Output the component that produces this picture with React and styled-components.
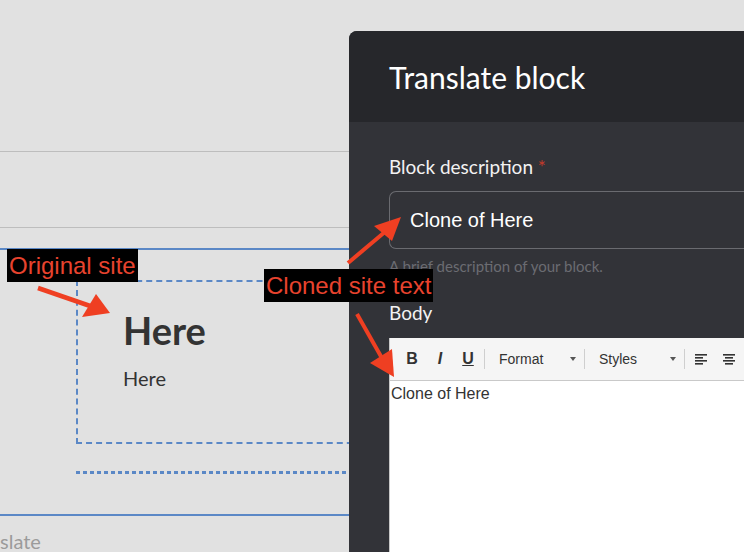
import styled, { createGlobalStyle } from "styled-components";

const GlobalStyle = createGlobalStyle`
  html, body {
    margin: 0;
    padding: 0;
    background: #e1e1e1;
    overflow: hidden;
  }
  * {
    box-sizing: border-box;
  }
`;

const ARROW_RED = "#ef3f22";

const App = () => {
  return (
    <Page>
      <GlobalStyle />
      <Site>
        <TopBand />
        <MidBand />
        <Region>
          <DashedBox>
            <BlockTitle>Here</BlockTitle>
            <BlockText>Here</BlockText>
          </DashedBox>
          <DottedRule />
        </Region>
        <Footer>slate</Footer>
      </Site>

      <Dialog>
        <DialogHeader>
          <DialogTitle>Translate block</DialogTitle>
        </DialogHeader>
        <DialogBody>
          <Label>
            Block description <Required>*</Required>
          </Label>
          <TextInput>Clone of Here</TextInput>
          <Help>A brief description of your block.</Help>
          <Label $spaced>Body</Label>
          <Editor>
            <Toolbar>
              <ToolButton>B</ToolButton>
              <ToolButton $italic>I</ToolButton>
              <ToolButton $underline>U</ToolButton>
              <Separator />
              <Dropdown>
                Format
                <Caret />
              </Dropdown>
              <Separator />
              <Dropdown>
                Styles
                <Caret />
              </Dropdown>
              <Separator />
              <IconButton>
                <AlignIcon kind="left" />
              </IconButton>
              <IconButton>
                <AlignIcon kind="center" />
              </IconButton>
            </Toolbar>
            <EditorContent>Clone of Here</EditorContent>
          </Editor>
        </DialogBody>
      </Dialog>

      <Note style={{ left: 7, top: 249 }}>Original site</Note>
      <Note style={{ left: 264, top: 269 }}>Cloned site text</Note>

      <Arrows width="744" height="552" viewBox="0 0 744 552">
        <line x1="38" y1="288" x2="96" y2="308" stroke={ARROW_RED} strokeWidth="4.5" />
        <polygon points="82,317 96,294 110,313" fill={ARROW_RED} />

        <line x1="348" y1="263" x2="386" y2="231" stroke={ARROW_RED} strokeWidth="4" />
        <polygon points="374,226 401,217 392,241" fill={ARROW_RED} />

        <line x1="357" y1="314" x2="383" y2="360" stroke={ARROW_RED} strokeWidth="4" />
        <polygon points="370,363 392,349 394,377" fill={ARROW_RED} />
      </Arrows>
    </Page>
  );
};

export default App;

const AlignIcon = ({ kind }) => {
  const rows =
    kind === "left"
      ? [
          [0, 12],
          [0, 8],
          [0, 12],
          [0, 8],
        ]
      : [
          [0, 12],
          [2, 8],
          [0, 12],
          [2, 8],
        ];
  return (
    <svg width="12" height="11" viewBox="0 0 12 11">
      {rows.map(([x, w], i) => (
        <rect key={i} x={x} y={i * 3} width={w} height="1.6" fill="#333" />
      ))}
    </svg>
  );
};

const Page = styled.div`
  position: relative;
  width: 744px;
  height: 552px;
  overflow: hidden;
  font-family: Lato, "Open Sans", sans-serif;
`;

const Site = styled.div`
  display: flex;
  flex-direction: column;
`;

const TopBand = styled.div`
  height: 152px;
  border-bottom: 1px solid #bdbdbd;
`;

const MidBand = styled.div`
  height: 76px;
  border-bottom: 1px solid #bdbdbd;
  margin-bottom: 20px;
`;

const Region = styled.div`
  border-top: 2px solid #5b88c6;
  border-bottom: 2px solid #5b88c6;
  padding: 30px 0 40px 76px;
`;

const DashedBox = styled.div`
  border: 2px dashed #5b88c6;
  border-right: none;
  height: 164px;
  padding: 26px 0 0 45px;
`;

const BlockTitle = styled.h2`
  margin: 0;
  font-size: 38px;
  line-height: 1.2;
  font-weight: 700;
  color: #333;
`;

const BlockText = styled.p`
  margin: 12px 0 0;
  font-size: 20px;
  line-height: 1.2;
  color: #333;
`;

const DottedRule = styled.div`
  margin-top: 27px;
  height: 3px;
  background: repeating-linear-gradient(
    to right,
    #5b88c6 0 4px,
    transparent 4px 7px
  );
`;

const Footer = styled.div`
  padding-top: 13px;
  font-size: 20px;
  color: #9b9b9b;
`;

const Dialog = styled.div`
  position: absolute;
  left: 349px;
  top: 31px;
  width: 440px;
  height: 540px;
  border-radius: 8px 0 0 0;
  overflow: hidden;
  background: #323338;
  display: flex;
  flex-direction: column;
`;

const DialogHeader = styled.div`
  height: 91px;
  flex-shrink: 0;
  background: #26272b;
  display: flex;
  align-items: center;
  padding-left: 40px;
`;

const DialogTitle = styled.h1`
  margin: 0;
  font-size: 30px;
  font-weight: 400;
  color: #fff;
`;

const DialogBody = styled.div`
  flex: 1;
  padding: 33px 0 0 40px;
  display: flex;
  flex-direction: column;
`;

const Label = styled.div`
  font-size: 19px;
  line-height: 23px;
  color: #f2f2f2;
  margin-top: ${(p) => (p.$spaced ? "26px" : "0")};
`;

const Required = styled.span`
  color: #c23a2b;
`;

const TextInput = styled.div`
  margin-top: 13px;
  height: 58px;
  border: 1.5px solid #6a6b70;
  border-right: none;
  border-radius: 7px 0 0 7px;
  display: flex;
  align-items: center;
  padding-left: 20px;
  font-family: "Liberation Sans", Arial, sans-serif;
  font-size: 20px;
  color: #fff;
`;

const Help = styled.div`
  margin-top: 8px;
  font-size: 15px;
  line-height: 18px;
  color: #6b6c72;
`;

const Editor = styled.div`
  flex: 1;
  margin-top: 14px;
  border-left: 1px solid #c8c8c8;
  background: #fff;
  font-family: "Liberation Sans", Arial, sans-serif;
`;

const Toolbar = styled.div`
  height: 43px;
  background: #f5f5f5;
  border-bottom: 1px solid #c9c9c9;
  display: flex;
  align-items: center;
  padding-left: 8px;
`;

const ToolButton = styled.div`
  width: 28px;
  text-align: center;
  font-size: 16px;
  font-weight: 700;
  color: #333;
  font-style: ${(p) => (p.$italic ? "italic" : "normal")};
  text-decoration: ${(p) => (p.$underline ? "underline" : "none")};
`;

const Separator = styled.div`
  width: 1px;
  height: 20px;
  background: #cfcfcf;
  margin: 0 2px;
`;

const Dropdown = styled.div`
  width: 95px;
  display: flex;
  align-items: center;
  justify-content: space-between;
  padding: 0 6px 0 12px;
  font-size: 14px;
  color: #333;
`;

const Caret = styled.span`
  width: 0;
  height: 0;
  border-left: 3.5px solid transparent;
  border-right: 3.5px solid transparent;
  border-top: 4px solid #555;
`;

const IconButton = styled.div`
  width: 28px;
  display: flex;
  justify-content: center;
  align-items: center;
`;

const EditorContent = styled.div`
  padding: 4px 0 0 1px;
  font-size: 16px;
  color: #333;
`;

const Note = styled.div`
  position: absolute;
  height: 33px;
  padding: 0 2px;
  background: #000;
  color: #e8432e;
  font-family: "Liberation Sans", Arial, sans-serif;
  font-size: 24px;
  line-height: 33px;
  white-space: nowrap;
`;

const Arrows = styled.svg`
  position: absolute;
  left: 0;
  top: 0;
  pointer-events: none;
`;
